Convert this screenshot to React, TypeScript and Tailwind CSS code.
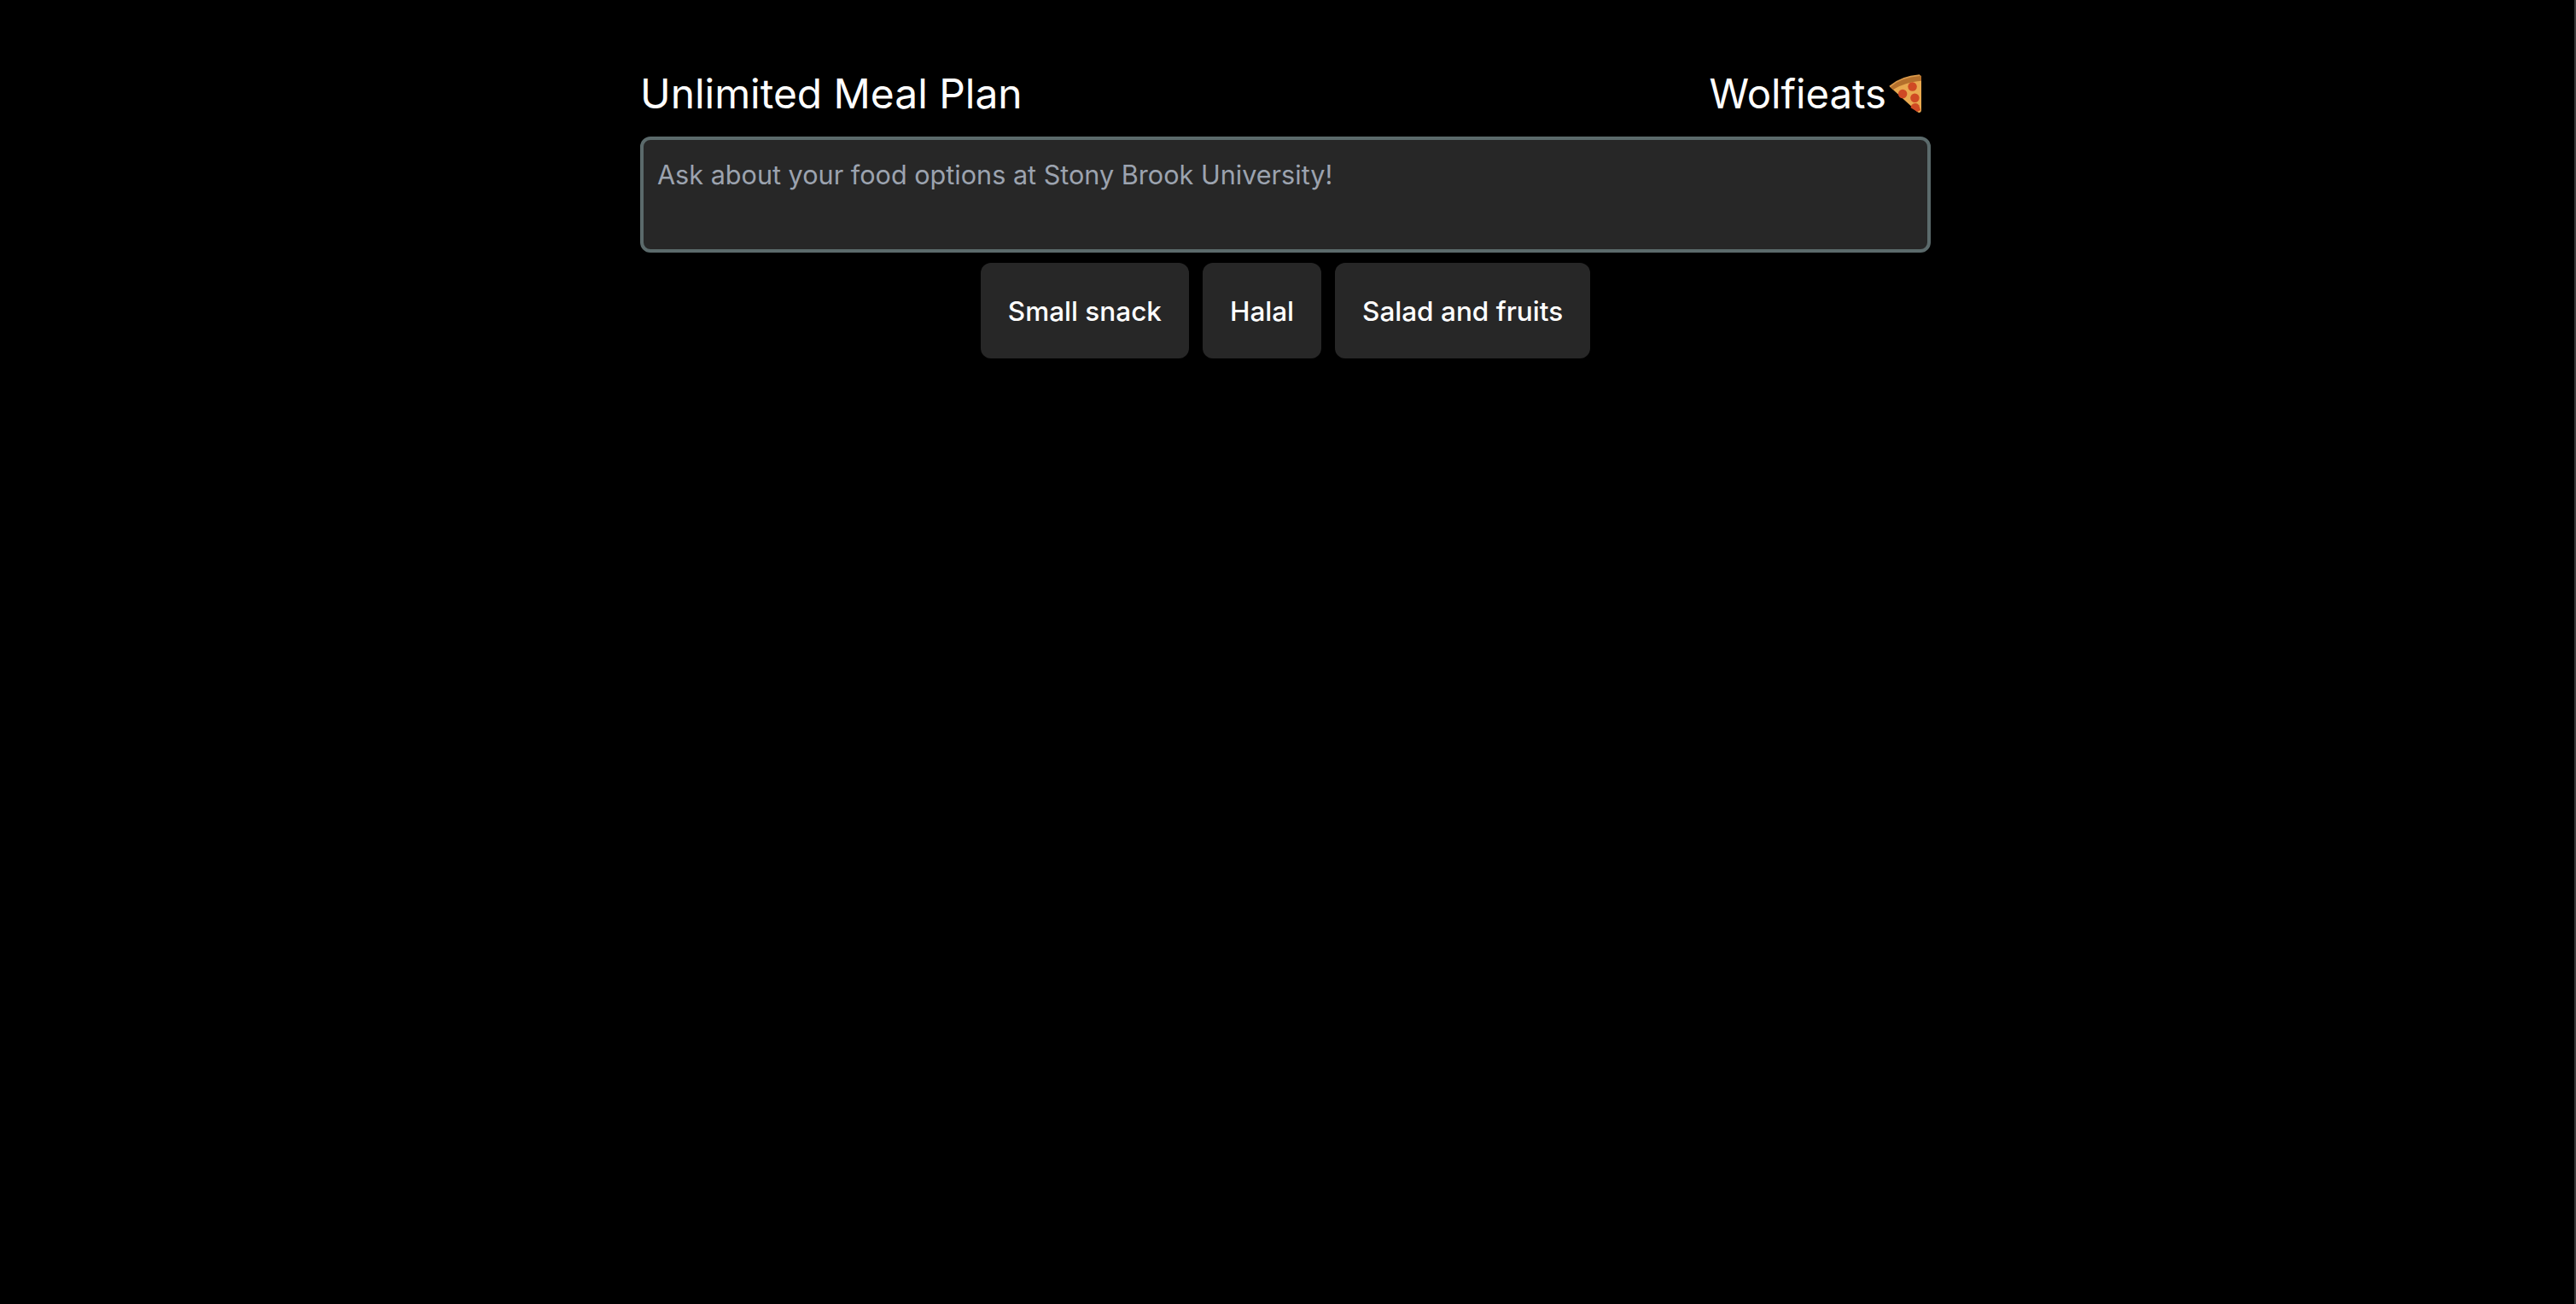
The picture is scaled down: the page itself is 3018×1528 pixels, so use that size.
export default function App() {
  const chips = ["Small snack", "Halal", "Salad and fruits"];
  return (
    <div className="h-screen w-full overflow-hidden bg-black border-r-2 border-[#3a3a3a] pr-1 font-['Inter',sans-serif]">
      <main className="mx-auto w-[1512px] pt-[80px] flex flex-col">
        <header className="flex items-center justify-between h-[60px] pr-[11px] leading-[60px] text-white">
          <h1 className="text-[47.9px]">Unlimited Meal Plan</h1>
          <div className="flex items-center gap-[3px]">
            <span className="text-[47.3px]">Wolfieats</span>
            <svg viewBox="0 0 40 48" className="w-[38px] h-[46px]">
              <path d="M1 15 C10 7 24 2 38 1 C39 1 40 2 40 3 L40 44 C40 47 37 48 35 46 Z" fill="#e9a94f" />
              <path d="M1 15 C10 7 24 2 38 1 C39 1 40 2 40 3 L40 8 C27 9 14 13 5 19 Z" fill="#b4702c" />
              <path d="M1 15 C10 7 24 2 38 1" fill="none" stroke="#d9994a" strokeWidth="2" />
              <circle cx="29" cy="15" r="5.5" fill="#cf4a24" />
              <circle cx="17" cy="24" r="5.5" fill="#cf4a24" />
              <circle cx="32" cy="29" r="5.5" fill="#cf4a24" />
              <path d="M27 41 A5.5 5.5 0 0 1 37 38 L39 44 L35 46 Z" fill="#cf4a24" />
            </svg>
          </div>
        </header>
        <textarea
          readOnly
          placeholder="Ask about your food options at Stony Brook University!"
          className="mt-[20px] block w-full h-[136px] resize-none rounded-[12px] border-4 border-[#5b6a6b] bg-[#272727] px-4 pt-[18px] pb-2 text-[30.6px] leading-[46px] text-white placeholder:text-[#9ca3af] outline-none"
        />
        <div className="mt-3 flex justify-center gap-4">
          {chips.map((c) => (
            <button key={c} className="h-[112px] rounded-[12px] bg-[#272727] px-8 pt-[2px] text-[31.5px] leading-[48px] font-medium text-white">
              {c}
            </button>
          ))}
        </div>
      </main>
    </div>
  );
}
